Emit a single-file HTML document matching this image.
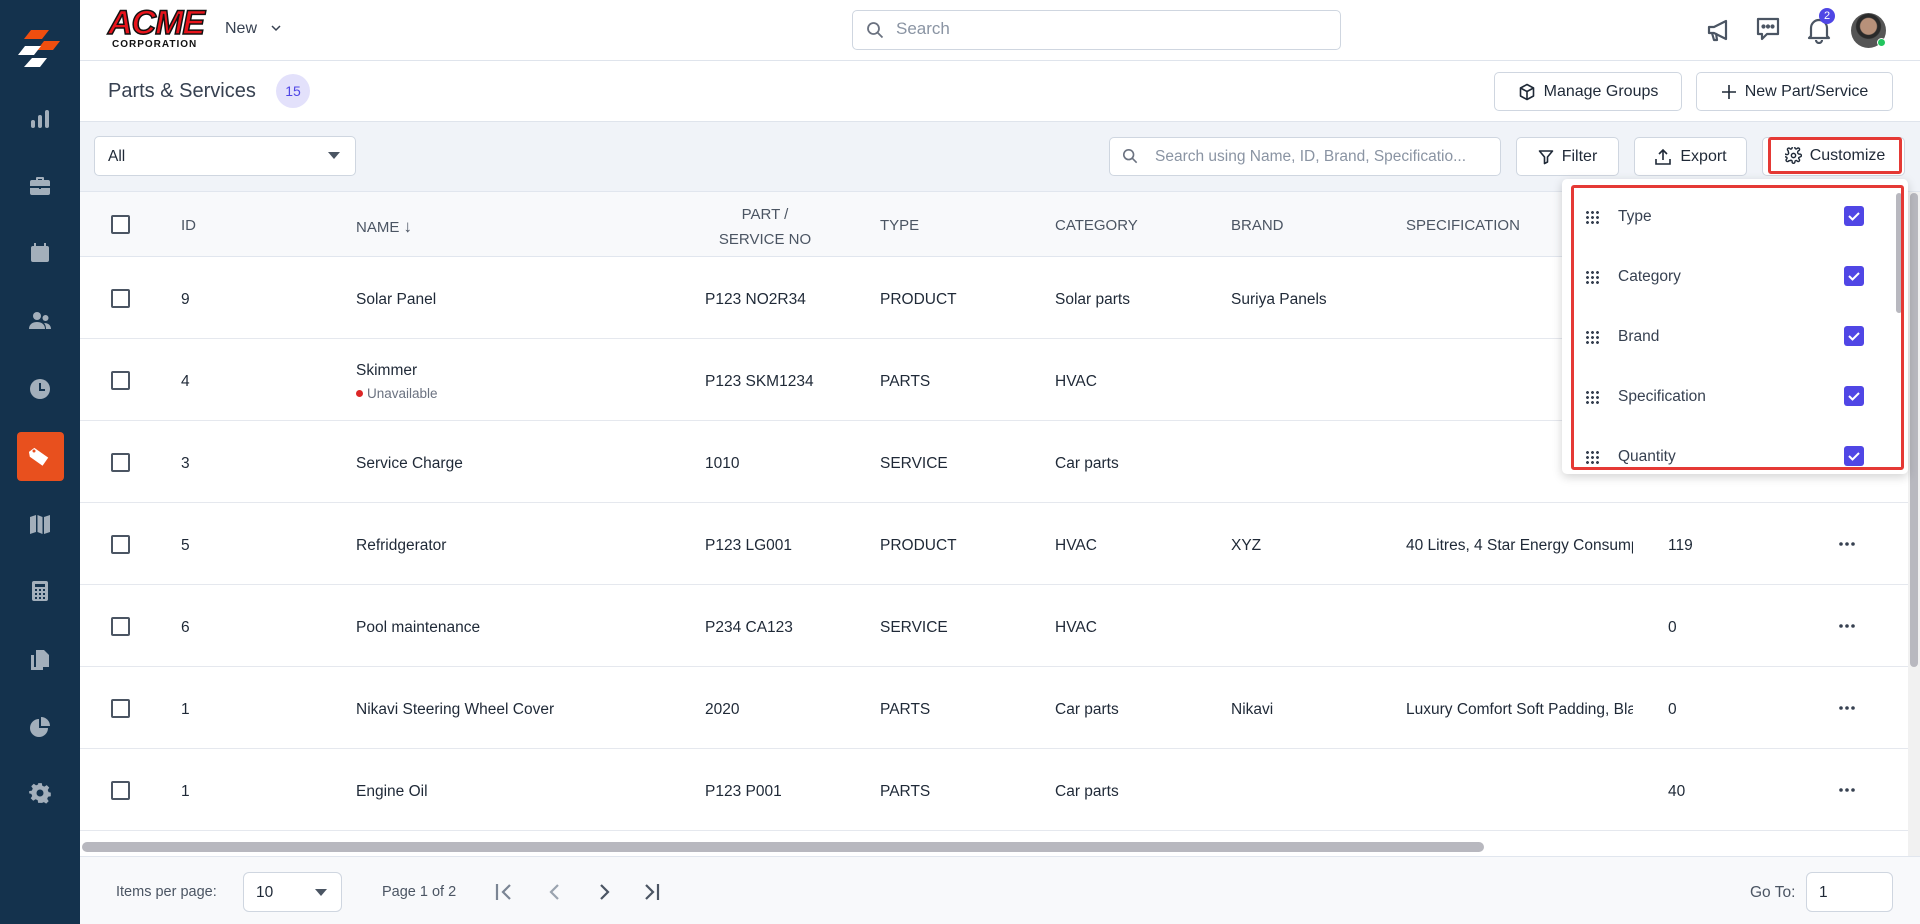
<!DOCTYPE html>
<html><head><meta charset="utf-8"><style>
*{box-sizing:border-box;margin:0;padding:0}
body{width:1920px;height:924px;overflow:hidden;font-family:"Liberation Sans",sans-serif;background:#fff;position:relative;color:#1f2937}
.a{position:absolute}
.sb{left:0;top:0;width:80px;height:924px;background:#14324d}
.ic{position:absolute;left:28px;width:24px;height:24px}
.btn{position:absolute;background:#fff;border:1px solid #cfd6e0;border-radius:5px;font-size:16px;color:#1f2937;display:flex;align-items:center;justify-content:center;gap:8px}
.hd{font-size:15px;color:#4b5563;position:absolute}
.cb{position:absolute;width:19px;height:19px;border:2px solid #4b5563;border-radius:2px;background:#fff}
.row{position:absolute;left:80px;width:1828px;height:82px;border-bottom:1px solid #e5e8ee;background:#fff}
.c{position:absolute;font-size:15.5px;color:#1f2937;top:34px;white-space:nowrap}
.dots{position:absolute;left:1758px;top:38px}
.it{position:absolute;left:1571px;width:330px;height:30px;font-size:15.5px;color:#374151}
.grip{position:absolute;left:14px;top:9px;width:14px;height:14px;background-image:radial-gradient(circle,#374151 1.3px,transparent 1.6px);background-size:5px 5px}
.chk{position:absolute;left:273px;top:5px;width:20px;height:20px;background:#5046e5;border-radius:3px}
</style></head><body>
<!-- sidebar -->
<div class="a sb">
 <svg class="a" style="left:17px;top:30px" width="46" height="40" viewBox="0 0 46 40"><polygon points="14,0 32,0 25,9 7,9" fill="#f04e0f"/><polygon points="27,11 43,11 36,20 20,20" fill="#f04e0f"/><polygon points="8,16 24,16 17,25 1,25" fill="#fff"/><polygon points="15,28 30,28 23,37 7,37" fill="#fff"/></svg>
 <svg class="ic" style="top:107px" viewBox="0 0 24 24" fill="#a3afbb"><rect x="3" y="13" width="4" height="8" rx="2"/><rect x="10" y="8" width="4" height="13" rx="2"/><rect x="17" y="3" width="4" height="18" rx="2"/></svg>
 <svg class="ic" style="top:174px" viewBox="0 0 24 24" fill="#a3afbb"><path d="M9 3h6a1 1 0 0 1 1 1v2h4a2 2 0 0 1 2 2v4H2V8a2 2 0 0 1 2-2h4V4a1 1 0 0 1 1-1zm1 2v1h4V5zM2 14h9v1h2v-1h9v5a2 2 0 0 1-2 2H4a2 2 0 0 1-2-2z"/></svg>
 <svg class="ic" style="top:241px" viewBox="0 0 24 24" fill="#a3afbb"><path d="M6 2h2v3h8V2h2v3h1a2 2 0 0 1 2 2v12a2 2 0 0 1-2 2H5a2 2 0 0 1-2-2V7a2 2 0 0 1 2-2h1z"/></svg>
 <svg class="ic" style="top:309px" viewBox="0 0 24 24" fill="#a3afbb"><circle cx="9" cy="7" r="4"/><path d="M1 20c0-5 4-7 8-7s8 2 8 7z"/><circle cx="17.5" cy="9" r="3"/><path d="M18 20c0-3-1-5-2-6 4 0 7 2 7 6z"/></svg>
 <svg class="ic" style="top:377px" viewBox="0 0 24 24"><circle cx="12" cy="12" r="10" fill="#a3afbb"/><path d="M12 6v7h5" stroke="#14324d" stroke-width="2" fill="none"/></svg>
 <div class="a" style="left:17px;top:432px;width:47px;height:49px;background:#e8501e;border-radius:4px"></div>
 <svg class="ic" style="top:445px" viewBox="0 0 24 24"><path d="M2 5l6-3 12 12-7 7L2 10z" fill="#fff" transform="rotate(-10 12 12)"/><circle cx="6" cy="6" r="1.5" fill="#e8501e"/></svg>
 <svg class="ic" style="top:512px" viewBox="0 0 24 24" fill="#a3afbb"><path d="M2 5l6-2v17l-6 2zM9.5 3l5 2v17l-5-2zM16 5l6-2v17l-6 2z"/></svg>
 <svg class="ic" style="top:579px" viewBox="0 0 24 24"><rect x="4" y="2" width="16" height="20" rx="2" fill="#a3afbb"/><rect x="7" y="5" width="10" height="3" fill="#14324d"/><g fill="#14324d"><rect x="7" y="10" width="2" height="2"/><rect x="11" y="10" width="2" height="2"/><rect x="15" y="10" width="2" height="2"/><rect x="7" y="14" width="2" height="2"/><rect x="11" y="14" width="2" height="2"/><rect x="15" y="14" width="2" height="2"/><rect x="7" y="18" width="2" height="2"/><rect x="11" y="18" width="2" height="2"/><rect x="15" y="18" width="2" height="2"/></g></svg>
 <svg class="ic" style="top:648px" viewBox="0 0 24 24" fill="#a3afbb"><path d="M3 7h3v12h9v3H3z"/><path d="M8 2h8l5 5v12H8z"/></svg>
 <svg class="ic" style="top:715px" viewBox="0 0 24 24" fill="#a3afbb"><path d="M11 4a9 9 0 1 0 9 9h-9z"/><path d="M13 2a9 9 0 0 1 9 9h-9z"/></svg>
 <svg class="ic" style="top:781px" viewBox="0 0 24 24" fill="#a3afbb"><path d="M10 1h4l.6 3 2.3 1 2.6-1.7 2.8 2.8L20.6 8.7l1 2.3 2.4.6v4l-3 .6-1 2.3 1.7 2.6-2.8 2.8-2.6-1.7-2.3 1L14 23h-4l-.6-3-2.3-1-2.6 1.7-2.8-2.8L3.4 15.3l-1-2.3L0 12.4V10l3-.6 1-2.3L2.3 4.6 5.1 1.8l2.6 1.7 2.3-1z" transform="scale(.9) translate(1.3 1.3)"/><circle cx="12" cy="12" r="3.5" fill="#14324d"/></svg>
</div>
<!-- top header -->
<div class="a" style="left:80px;top:0;width:1840px;height:61px;border-bottom:1px solid #dfe4ec;background:#fff"></div>
<div class="a" style="left:108px;top:6px;font:italic 900 34px/34px 'Liberation Sans',sans-serif;color:#e8141b;-webkit-text-stroke:1.5px #111;letter-spacing:-1px">ACME</div>
<div class="a" style="left:112px;top:40px;font:900 10px/10px 'Liberation Sans',sans-serif;color:#111;letter-spacing:1px">CORPORATION</div>
<div class="a" style="left:225px;top:20px;font-size:16px;color:#374151">New</div>
<svg class="a" style="left:270px;top:24px" width="12" height="8" viewBox="0 0 12 8"><path d="M2 2l4 4 4-4" stroke="#374151" stroke-width="1.5" fill="none"/></svg>
<div class="a" style="left:852px;top:10px;width:489px;height:40px;border:1px solid #cfd6e0;border-radius:5px"></div>
<svg class="a" style="left:866px;top:21px" width="18" height="18" viewBox="0 0 18 18"><circle cx="7.5" cy="7.5" r="5.5" stroke="#6b7280" stroke-width="1.8" fill="none"/><path d="M11.5 11.5l5 5" stroke="#6b7280" stroke-width="1.8"/></svg>
<div class="a" style="left:896px;top:19px;font-size:17px;color:#8a94a3">Search</div>
<svg class="a" style="left:1705px;top:16px" width="28" height="28" viewBox="0 0 28 28" fill="none" stroke="#4b5563" stroke-width="2.2" stroke-linejoin="round"><path d="M4 11h5l12-6v18l-12-6H4z"/><path d="M7 17l2 7h3l-1-7"/></svg>
<svg class="a" style="left:1754px;top:15px" width="28" height="28" viewBox="0 0 28 28" fill="none" stroke="#4b5563" stroke-width="2.2" stroke-linejoin="round"><path d="M4 4h20v15H13l-5 5v-5H4z"/><circle cx="9.5" cy="11.5" r="1" fill="#4b5563"/><circle cx="14" cy="11.5" r="1" fill="#4b5563"/><circle cx="18.5" cy="11.5" r="1" fill="#4b5563"/></svg>
<svg class="a" style="left:1806px;top:16px" width="26" height="28" viewBox="0 0 26 28" fill="none" stroke="#4b5563" stroke-width="2.2" stroke-linejoin="round"><path d="M5 20V12a8 8 0 0 1 16 0v8l2 2H3z"/><path d="M10 24a3 3 0 0 0 6 0"/></svg>
<div class="a" style="left:1819px;top:8px;width:16px;height:16px;border-radius:50%;background:#4f46e5;color:#fff;font-size:11px;text-align:center;line-height:16px">2</div>
<div class="a" style="left:1851px;top:13px;width:35px;height:35px;border-radius:50%;background:radial-gradient(circle at 50% 38%,#b8917a 0 8px,#2a2a2a 9px 12px,#555 13px)"></div>
<div class="a" style="left:1877px;top:38px;width:9px;height:9px;border-radius:50%;background:#22c55e;border:1px solid #fff"></div>
<!-- title bar -->
<div class="a" style="left:80px;top:61px;width:1840px;height:61px;border-bottom:1px solid #dfe4ec;background:#fff"></div>
<div class="a" style="left:108px;top:80px;font-size:20px;color:#374151">Parts &amp; Services</div>
<div class="a" style="left:276px;top:74px;width:34px;height:34px;border-radius:50%;background:#e3e1fb;color:#4f46e5;font-size:14px;text-align:center;line-height:34px">15</div>
<div class="btn" style="left:1494px;top:72px;width:188px;height:39px"><svg width="18" height="18" viewBox="0 0 18 18" fill="none" stroke="#1f2937" stroke-width="1.6" stroke-linejoin="round"><path d="M9 1.5l6.5 3.5v8L9 16.5 2.5 13V5z"/><path d="M2.5 5L9 8.5 15.5 5M9 8.5v8"/></svg>Manage Groups</div>
<div class="btn" style="left:1696px;top:72px;width:197px;height:39px"><svg width="16" height="16" viewBox="0 0 16 16" stroke="#1f2937" stroke-width="1.6"><path d="M8 1v14M1 8h14"/></svg>New Part/Service</div>
<!-- toolbar -->
<div class="a" style="left:80px;top:122px;width:1840px;height:70px;background:#f0f3f8;border-bottom:1px solid #e1e6ee"></div>
<div class="a" style="left:94px;top:136px;width:262px;height:40px;background:#fff;border:1px solid #cfd6e0;border-radius:5px"></div>
<div class="a" style="left:108px;top:148px;font-size:15.5px">All</div>
<svg class="a" style="left:328px;top:152px" width="12" height="8"><path d="M0 0h12L6 7z" fill="#4b5563"/></svg>
<div class="a" style="left:1109px;top:137px;width:392px;height:39px;background:#fff;border:1px solid #cfd6e0;border-radius:5px"></div>
<svg class="a" style="left:1122px;top:148px" width="16" height="16" viewBox="0 0 18 18"><circle cx="7.5" cy="7.5" r="5.5" stroke="#6b7280" stroke-width="1.8" fill="none"/><path d="M11.5 11.5l5 5" stroke="#6b7280" stroke-width="1.8"/></svg>
<div class="a" style="left:1155px;top:148px;font-size:15.5px;color:#8a94a3;white-space:nowrap;width:340px;overflow:hidden">Search using Name, ID, Brand, Specificatio...</div>
<div class="btn" style="left:1516px;top:137px;width:103px;height:39px"><svg width="16" height="16" viewBox="0 0 16 16" fill="none" stroke="#1f2937" stroke-width="1.6" stroke-linejoin="round"><path d="M1.5 2h13l-5 6v5l-3 1.5V8z"/></svg>Filter</div>
<div class="btn" style="left:1634px;top:137px;width:113px;height:39px"><svg width="18" height="18" viewBox="0 0 18 18" fill="none" stroke="#1f2937" stroke-width="1.6"><path d="M9 12V2M5 6l4-4 4 4M2 11v5h14v-5"/></svg>Export</div>
<div class="btn" style="left:1762px;top:137px;width:143px;height:39px"></div>
<div class="a" style="left:1768px;top:137px;width:134px;height:37px;border:3px solid #e53935;border-radius:3px;background:#fff;display:flex;align-items:center;justify-content:center;gap:8px;font-size:16px"><svg width="17" height="17" viewBox="0 0 24 24" fill="none" stroke="#1f2937" stroke-width="2"><circle cx="12" cy="12" r="3"/><path d="M19.4 15a1.7 1.7 0 0 0 .3 1.8l.1.1a2 2 0 1 1-2.8 2.8l-.1-.1a1.7 1.7 0 0 0-2.9 1.2V21a2 2 0 1 1-4 0v-.1A1.7 1.7 0 0 0 7 19.4a1.7 1.7 0 0 0-1.8.3l-.1.1a2 2 0 1 1-2.8-2.8l.1-.1A1.7 1.7 0 0 0 1.2 14H1a2 2 0 1 1 0-4h.1A1.7 1.7 0 0 0 4.6 7a1.7 1.7 0 0 0-.3-1.8l-.1-.1a2 2 0 1 1 2.8-2.8l.1.1A1.7 1.7 0 0 0 10 1.2V1a2 2 0 1 1 4 0v.1a1.7 1.7 0 0 0 2.9 1.2l.1-.1a2 2 0 1 1 2.8 2.8l-.1.1A1.7 1.7 0 0 0 21 10h.1a2 2 0 1 1 0 4z"/></svg>Customize</div>
<!-- table header -->
<div class="a" style="left:80px;top:192px;width:1828px;height:65px;background:#f8f9fb;border-bottom:1px solid #e1e6ee"></div>
<div class="cb" style="left:111px;top:215px"></div>
<div class="hd" style="left:181px;top:217px">ID</div>
<div class="hd" style="left:356px;top:217px">NAME <span style="font-size:17px">&#8595;</span></div>
<div class="hd" style="left:705px;top:202px;width:120px;text-align:center;line-height:25px">PART /<br>SERVICE NO</div>
<div class="hd" style="left:880px;top:217px">TYPE</div>
<div class="hd" style="left:1055px;top:217px">CATEGORY</div>
<div class="hd" style="left:1231px;top:217px">BRAND</div>
<div class="hd" style="left:1406px;top:217px">SPECIFICATION</div>
<!-- rows -->
<div class="row" style="top:257px"><div class="cb" style="left:31px;top:32px"></div><div class="c" style="left:101px">9</div><div class="c" style="left:276px">Solar Panel</div><div class="c" style="left:625px">P123 NO2R34</div><div class="c" style="left:800px">PRODUCT</div><div class="c" style="left:975px">Solar parts</div><div class="c" style="left:1151px">Suriya Panels</div></div>
<div class="row" style="top:339px"><div class="cb" style="left:31px;top:32px"></div><div class="c" style="left:101px">4</div><div class="c" style="left:276px;top:23px">Skimmer</div><div class="c" style="left:276px;top:47px;font-size:13.5px;color:#6b7280"><span style="display:inline-block;width:7px;height:7px;border-radius:50%;background:#dc2626;margin-right:4px;vertical-align:1px"></span>Unavailable</div><div class="c" style="left:625px">P123 SKM1234</div><div class="c" style="left:800px">PARTS</div><div class="c" style="left:975px">HVAC</div></div>
<div class="row" style="top:421px"><div class="cb" style="left:31px;top:32px"></div><div class="c" style="left:101px">3</div><div class="c" style="left:276px">Service Charge</div><div class="c" style="left:625px">1010</div><div class="c" style="left:800px">SERVICE</div><div class="c" style="left:975px">Car parts</div></div>
<div class="row" style="top:503px"><div class="cb" style="left:31px;top:32px"></div><div class="c" style="left:101px">5</div><div class="c" style="left:276px">Refridgerator</div><div class="c" style="left:625px">P123 LG001</div><div class="c" style="left:800px">PRODUCT</div><div class="c" style="left:975px">HVAC</div><div class="c" style="left:1151px">XYZ</div><div class="c" style="left:1326px;width:227px;overflow:hidden">40 Litres, 4 Star Energy Consumption</div><div class="c" style="left:1588px">119</div><svg class="dots" width="18" height="6"><circle cx="3" cy="3" r="1.8" fill="#374151"/><circle cx="9" cy="3" r="1.8" fill="#374151"/><circle cx="15" cy="3" r="1.8" fill="#374151"/></svg></div>
<div class="row" style="top:585px"><div class="cb" style="left:31px;top:32px"></div><div class="c" style="left:101px">6</div><div class="c" style="left:276px">Pool maintenance</div><div class="c" style="left:625px">P234 CA123</div><div class="c" style="left:800px">SERVICE</div><div class="c" style="left:975px">HVAC</div><div class="c" style="left:1588px">0</div><svg class="dots" width="18" height="6"><circle cx="3" cy="3" r="1.8" fill="#374151"/><circle cx="9" cy="3" r="1.8" fill="#374151"/><circle cx="15" cy="3" r="1.8" fill="#374151"/></svg></div>
<div class="row" style="top:667px"><div class="cb" style="left:31px;top:32px"></div><div class="c" style="left:101px">1</div><div class="c" style="left:276px">Nikavi Steering Wheel Cover</div><div class="c" style="left:625px">2020</div><div class="c" style="left:800px">PARTS</div><div class="c" style="left:975px">Car parts</div><div class="c" style="left:1151px">Nikavi</div><div class="c" style="left:1326px;width:227px;overflow:hidden">Luxury Comfort Soft Padding, Black</div><div class="c" style="left:1588px">0</div><svg class="dots" width="18" height="6"><circle cx="3" cy="3" r="1.8" fill="#374151"/><circle cx="9" cy="3" r="1.8" fill="#374151"/><circle cx="15" cy="3" r="1.8" fill="#374151"/></svg></div>
<div class="row" style="top:749px"><div class="cb" style="left:31px;top:32px"></div><div class="c" style="left:101px">1</div><div class="c" style="left:276px">Engine Oil</div><div class="c" style="left:625px">P123 P001</div><div class="c" style="left:800px">PARTS</div><div class="c" style="left:975px">Car parts</div><div class="c" style="left:1588px">40</div><svg class="dots" width="18" height="6"><circle cx="3" cy="3" r="1.8" fill="#374151"/><circle cx="9" cy="3" r="1.8" fill="#374151"/><circle cx="15" cy="3" r="1.8" fill="#374151"/></svg></div>
<!-- scrollbars -->
<div class="a" style="left:80px;top:840px;width:1828px;height:16px;background:#fff"></div>
<div class="a" style="left:82px;top:842px;width:1402px;height:10px;border-radius:5px;background:#b8b8bf"></div>
<div class="a" style="left:1908px;top:192px;width:12px;height:665px;background:#f1f1f1"></div>
<div class="a" style="left:1910px;top:193px;width:8px;height:474px;border-radius:4px;background:#b8b8bf"></div>
<!-- footer -->
<div class="a" style="left:80px;top:856px;width:1840px;height:68px;background:#f8f9fb;border-top:1px solid #e1e6ee"></div>
<div class="a" style="left:116px;top:884px;font-size:14.5px;color:#4b5563">Items per page:</div>
<div class="a" style="left:243px;top:872px;width:99px;height:40px;background:#fff;border:1px solid #cfd6e0;border-radius:6px"></div>
<div class="a" style="left:256px;top:884px;font-size:15.5px">10</div>
<svg class="a" style="left:315px;top:889px" width="12" height="7"><path d="M0 0h12L6 7z" fill="#4b5563"/></svg>
<div class="a" style="left:382px;top:884px;font-size:14.5px;color:#4b5563">Page 1 of 2</div>
<svg class="a" style="left:494px;top:881px" width="180" height="22" viewBox="0 0 180 22" fill="none" stroke-width="2.2"><path d="M3 3v16M16 4l-7 7 7 7" stroke="#7b8594"/><path d="M64 4l-7 7 7 7" stroke="#9aa3af"/><path d="M107 4l7 7-7 7" stroke="#4b5563"/><path d="M152 4l7 7-7 7M164 3v16" stroke="#4b5563"/></svg>
<div class="a" style="left:1750px;top:884px;font-size:15.5px;color:#4b5563">Go To:</div>
<div class="a" style="left:1806px;top:872px;width:87px;height:40px;background:#fff;border:1px solid #cfd6e0;border-radius:6px;font-size:15.5px;padding:11px 12px">1</div>
<!-- dropdown -->
<div class="a" style="left:1562px;top:179px;width:346px;height:295px;background:#fff;border-radius:5px;box-shadow:0 3px 10px rgba(0,0,0,.18)"></div>
<div class="a" style="left:1571px;top:185px;width:333px;height:285px;border:3px solid #e53935;border-radius:3px;overflow:hidden">
 <div class="a" style="left:322px;top:5px;width:6px;height:120px;border-radius:3px;background:#b8b8bf"></div>
</div>
<div class="it" style="top:201px"><div class="grip"></div><span class="a" style="left:47px;top:7px">Type</span><div class="chk"><svg width="20" height="20"><path d="M5 10l3.5 3.5L15 7" stroke="#fff" stroke-width="2" fill="none"/></svg></div></div>
<div class="it" style="top:261px"><div class="grip"></div><span class="a" style="left:47px;top:7px">Category</span><div class="chk"><svg width="20" height="20"><path d="M5 10l3.5 3.5L15 7" stroke="#fff" stroke-width="2" fill="none"/></svg></div></div>
<div class="it" style="top:321px"><div class="grip"></div><span class="a" style="left:47px;top:7px">Brand</span><div class="chk"><svg width="20" height="20"><path d="M5 10l3.5 3.5L15 7" stroke="#fff" stroke-width="2" fill="none"/></svg></div></div>
<div class="it" style="top:381px"><div class="grip"></div><span class="a" style="left:47px;top:7px">Specification</span><div class="chk"><svg width="20" height="20"><path d="M5 10l3.5 3.5L15 7" stroke="#fff" stroke-width="2" fill="none"/></svg></div></div>
<div class="it" style="top:441px;height:25px;overflow:hidden"><div class="grip"></div><span class="a" style="left:47px;top:7px">Quantity</span><div class="chk"><svg width="20" height="20"><path d="M5 10l3.5 3.5L15 7" stroke="#fff" stroke-width="2" fill="none"/></svg></div></div>
</body></html>
